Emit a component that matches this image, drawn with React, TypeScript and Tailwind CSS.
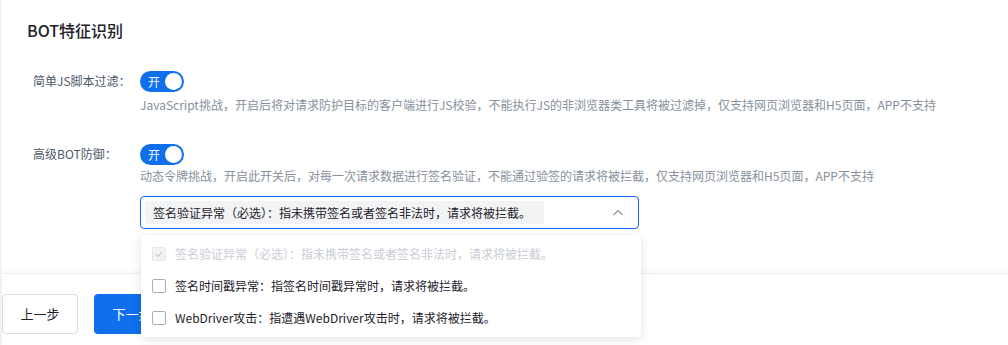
import React from "react";

const font = { fontFamily: '"Noto Sans CJK SC", "Noto Sans", sans-serif' };

function Switch() {
  return (
    <div className="flex h-[21px] w-[44px] items-center justify-between rounded-full bg-[#0f6fec] pl-[8px] pr-[2px]">
      <span className="text-[12px] leading-none text-white">开</span>
      <span className="h-[17px] w-[17px] rounded-full bg-white" />
    </div>
  );
}

function Checkbox({ disabled }: { disabled?: boolean }) {
  return (
    <span
      className={
        disabled
          ? "flex h-[14px] w-[14px] items-center justify-center rounded-[2px] border border-[#e5e6eb] bg-[#f2f3f5]"
          : "flex h-[14px] w-[14px] items-center justify-center rounded-[2px] border border-[#a9aeb8] bg-white"
      }
    >
      {disabled && (
        <svg width="10" height="10" viewBox="0 0 10 10" fill="none">
          <path d="M2 5.2 L4.2 7.3 L8 3" stroke="#c9cdd4" strokeWidth="1.2" />
        </svg>
      )}
    </span>
  );
}

export default function App() {
  return (
    <div className="relative h-[345px] w-[1008px] overflow-hidden bg-[#f4f5f7] pl-[2px]" style={font}>
      <div className="h-[273px] bg-white pl-[25px] pt-[18px]">
        <div className="text-[16px] font-medium leading-[24px] text-[#1d2129]">BOT特征识别</div>
        <div className="mt-[29px] flex">
          <div className="w-[113px] pl-[6px] text-[12px] leading-[20px] text-[#4e5969]">简单JS脚本过滤：</div>
          <div>
            <Switch />
            <div className="mt-[3px] text-[12px] leading-[20px] text-[#86909c]">
              JavaScript挑战，开启后将对请求防护目标的客户端进行JS校验，不能执行JS的非浏览器类工具将被过滤掉，仅支持网页浏览器和H5页面，APP不支持
            </div>
          </div>
        </div>
        <div className="mt-[29px] flex">
          <div className="w-[113px] pl-[6px] text-[12px] leading-[20px] text-[#4e5969]">高级BOT防御：</div>
          <div>
            <Switch />
            <div className="mt-[1px] text-[12px] leading-[20px] text-[#86909c]">
              动态令牌挑战，开启此开关后，对每一次请求数据进行签名验证，不能通过验签的请求将被拦截，仅支持网页浏览器和H5页面，APP不支持
            </div>
            <div className="mt-[10px] flex h-[33px] w-[499px] items-center justify-between rounded-[4px] border border-[#1664ff] pl-[4px] pr-[14px]">
              <div className="flex h-[23px] w-[399px] items-center whitespace-nowrap rounded-[2px] bg-[#f2f3f5] pl-[8px] text-[12px] text-[#1d2129]">
                签名验证异常（必选）：指未携带签名或者签名非法时，请求将被拦截。
              </div>
              <svg width="12" height="12" viewBox="0 0 12 12" fill="none">
                <path d="M1.5 8 L6 3.5 L10.5 8" stroke="#86909c" strokeWidth="1.1" />
              </svg>
            </div>
          </div>
        </div>
      </div>
      <div className="mt-[1px] h-[71px] bg-white pt-[20px] shadow-[0_-2px_6px_rgba(0,0,0,0.04)]">
        <div className="flex gap-[16px]">
          <button className="h-[40px] w-[76px] rounded-[4px] border border-[#d9dbe0] bg-white text-[13px] text-[#1d2129]">上一步</button>
          <button className="h-[40px] w-[76px] rounded-[4px] bg-[#0f6fec] text-[13px] text-white">下一步</button>
        </div>
      </div>
      <div className="absolute left-[141px] top-[235px] w-[500px] rounded-[4px] bg-white py-[3px] shadow-[0_2px_10px_rgba(0,0,0,0.12)]">
        <div className="flex h-[32px] items-center gap-[9px] whitespace-nowrap pl-[11px] text-[12px] text-[#c9cdd4]">
          <Checkbox disabled />
          <span>签名验证异常（必选）：指未携带签名或者签名非法时，请求将被拦截。</span>
        </div>
        <div className="flex h-[32px] items-center gap-[9px] whitespace-nowrap pl-[11px] text-[12px] text-[#1d2129]">
          <Checkbox />
          <span>签名时间戳异常：指签名时间戳异常时，请求将被拦截。</span>
        </div>
        <div className="flex h-[32px] items-center gap-[9px] whitespace-nowrap pl-[11px] text-[12px] text-[#1d2129]">
          <Checkbox />
          <span>WebDriver攻击：指遭遇WebDriver攻击时，请求将被拦截。</span>
        </div>
      </div>
    </div>
  );
}
